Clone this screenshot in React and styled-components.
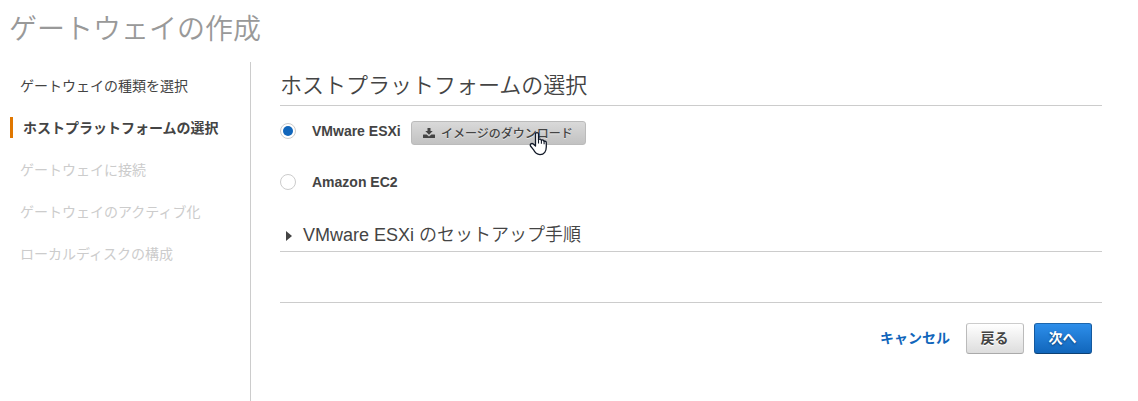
import React from 'react';
import styled, { createGlobalStyle } from 'styled-components';

const GlobalStyle = createGlobalStyle`
  * { box-sizing: border-box; }
  body {
    margin: 0;
    background: #fff;
    color: #444;
    font-family: "Liberation Sans", "Noto Sans CJK JP", sans-serif;
    font-size: 14px;
  }
`;

const Page = styled.div`
  height: 401px;
  display: flex;
  flex-direction: column;
  overflow: hidden;
  white-space: nowrap;
`;

const PageTitle = styled.h1`
  margin: 0;
  height: 62px;
  padding: 10px 0 0 9px;
  font-size: 28px;
  font-weight: 350;
  line-height: 40px;
  color: #999;
`;

const Columns = styled.div`
  display: flex;
  flex: 1;
`;

const Steps = styled.nav`
  width: 251px;
  padding: 13px 0 0 10px;
  border-right: 1px solid #ccc;
`;

const stepColors = { done: '#444', current: '#444', pending: '#ccc' };

const Step = styled.div`
  height: 21px;
  margin-bottom: 21px;
  line-height: 23px;
  color: ${(p) => stepColors[p.$state]};
  font-weight: ${(p) => (p.$state === 'current' ? 700 : 400)};
  padding-left: 10px;
  border-left: ${(p) => (p.$state === 'current' ? '3px solid #e07700' : '0')};
`;

const Content = styled.main`
  width: 851px;
  padding: 9px 0 0 29px;
`;

const Heading = styled.h2`
  margin: 0;
  height: 35px;
  line-height: 30px;
  font-size: 22px;
  font-weight: 350;
  border-bottom: 1px solid #ccc;
`;

const Option = styled.div`
  display: flex;
  align-items: center;
  height: 51px;
  padding-bottom: 2px;
`;

const Radio = styled.span`
  width: 16px;
  height: 16px;
  display: flex;
  align-items: center;
  justify-content: center;
  border: 1px solid #ccc;
  border-radius: 50%;
  background: #fff;

  &::after {
    content: '';
    width: 10px;
    height: 10px;
    border-radius: 50%;
    background: ${(p) => (p.$checked ? '#1166bb' : 'transparent')};
  }
`;

const OptionLabel = styled.label`
  margin-left: 16px;
  width: 99px;
  font-weight: 700;
  line-height: 20px;
`;

const DownloadButton = styled.button`
  position: relative;
  display: flex;
  align-items: center;
  width: 175px;
  height: 24px;
  margin-top: 5px;
  padding: 0 0 1px 11px;
  border: 1px solid #bbb;
  border-radius: 3px;
  background: linear-gradient(#d9d9d9, #c2c2c2);
  color: #444;
  font: 500 12px/22px "Noto Sans CJK JP", sans-serif;
  text-shadow: 0 1px 0 #e4e4e4;
  white-space: nowrap;

  > svg:first-child { margin-right: 6px; }
`;

const Pointer = styled.svg`
  position: absolute;
  left: 117px;
  top: 9px;
`;

const Options = styled.div`
  height: 102px;
`;

const Disclosure = styled.div`
  display: flex;
  align-items: center;
  height: 44px;
  padding: 10px 0 0 6px;
  border-bottom: 1px solid #ccc;
  font-size: 18px;
  font-weight: 350;
  line-height: 34px;
`;

const Caret = styled.span`
  margin: 3px 11px 0 0;
  border: solid transparent;
  border-width: 5px 0 5px 6px;
  border-left-color: #444;
`;

const Footer = styled.footer`
  display: flex;
  justify-content: flex-end;
  align-items: center;
  margin-top: 50px;
  padding: 20px 10px 0 0;
  border-top: 1px solid #ccc;
`;

const CancelLink = styled.a`
  margin-right: 16px;
  padding-bottom: 1px;
  color: #1166bb;
  font-weight: 700;
  line-height: 30px;
`;

const ActionButton = styled.button`
  width: 58px;
  height: 31px;
  padding: 0 1px 3px 0;
  margin-left: ${(p) => (p.$primary ? 10 : 0)}px;
  border: 1px solid;
  border-color: ${(p) => (p.$primary ? '#1c66ad #14599e #0d4174' : '#ccc #bbb #aaa')};
  border-radius: 3px;
  background: ${(p) => (p.$primary ? 'linear-gradient(#2d8eea, #1166bb)' : 'linear-gradient(#fff, #ddd)')};
  color: ${(p) => (p.$primary ? '#fff' : '#444')};
  font: 700 14px/26px "Noto Sans CJK JP", sans-serif;
  text-shadow: ${(p) => (p.$primary ? '0 1px 2px #0a3c70' : '0 1px 0 #fff')};
`;

const steps = [
  ['ゲートウェイの種類を選択', 'done'],
  ['ホストプラットフォームの選択', 'current'],
  ['ゲートウェイに接続', 'pending'],
  ['ゲートウェイのアクティブ化', 'pending'],
  ['ローカルディスクの構成', 'pending'],
];

function DownloadIcon() {
  return (
    <svg width="12" height="12" viewBox="0 0 12 12" fill="currentColor" aria-hidden="true">
      <path d="M4.5 1H7.5V4H9.7L6 7.8L2.3 4H4.5Z" />
      <path d="M.5 7.5H3.6L6 9.4L8.4 7.5H11.5Q12 7.5 12 8V10.5Q12 11 11.5 11H.5Q0 11 0 10.5V8Q0 7.5 .5 7.5Z" />
    </svg>
  );
}

function HandPointer() {
  return (
    <Pointer width="19" height="25" viewBox="0 0 19 25" aria-hidden="true">
      <path
        d="M6.5 15V3.3C6.5 1.1 9.5 1.1 9.5 3.3V8.7C10.3 7.6 12.2 7.9 12.4 9.4C13.4 8.5 15 9 15.1 10.4C16.2 9.8 17.3 10.5 17.3 11.8V15.8C17.3 20 15.2 23.6 11 23.6C7.5 23.6 5.7 21.4 4.4 18.6L1.5 15C0.6 13.3 2.7 11.7 4.3 13.1Z"
        fill="#fff"
        stroke="#111827"
        strokeWidth="1.3"
        strokeLinejoin="round"
      />
      <path d="M9.5 8.5V12.5M12.4 9.3V12.8M15.1 10.3V13.3" fill="none" stroke="#111827" strokeWidth="1.1" />
    </Pointer>
  );
}

export default function App() {
  return (
    <Page lang="ja">
      <GlobalStyle />
      <PageTitle>ゲートウェイの作成</PageTitle>
      <Columns>
        <Steps>
          {steps.map(([label, state]) => (
            <Step key={label} $state={state}>{label}</Step>
          ))}
        </Steps>
        <Content>
          <Heading>ホストプラットフォームの選択</Heading>
          <Options>
            <Option>
              <Radio $checked />
              <OptionLabel>VMware ESXi</OptionLabel>
              <DownloadButton>
                <DownloadIcon />
                イメージのダウンロード
                <HandPointer />
              </DownloadButton>
            </Option>
            <Option>
              <Radio />
              <OptionLabel>Amazon EC2</OptionLabel>
            </Option>
          </Options>
          <Disclosure>
            <Caret />
            VMware ESXi のセットアップ手順
          </Disclosure>
          <Footer>
            <CancelLink>キャンセル</CancelLink>
            <ActionButton>戻る</ActionButton>
            <ActionButton $primary>次へ</ActionButton>
          </Footer>
        </Content>
      </Columns>
    </Page>
  );
}
